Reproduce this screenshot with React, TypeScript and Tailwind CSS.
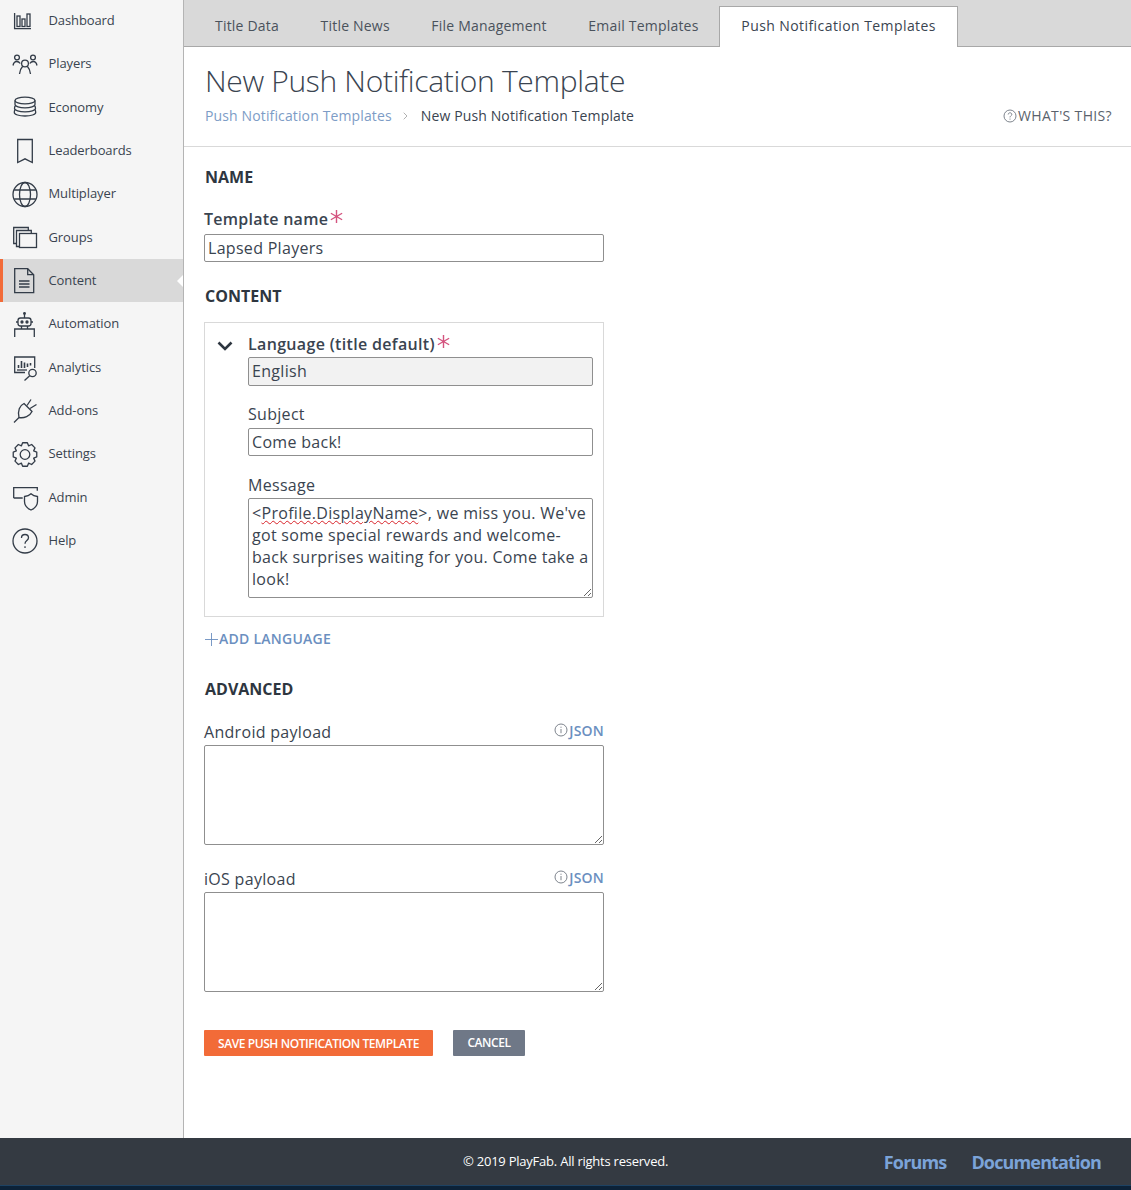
// App.tsx - PlayFab style "New Push Notification Template" page.
import type { ReactNode } from "react";

const font = { fontFamily: '"Open Sans", "Liberation Sans", sans-serif' };

function Glyph({ children }: { children: ReactNode }) {
  return (
    <svg viewBox="0 0 28 28" width="28" height="28" fill="none" stroke="#333c48" strokeWidth="1.3" className="shrink-0">
      {children}
    </svg>
  );
}

// Cog outline: 8 teeth around (14, 14.5)
function cogPath() {
  const pts: string[] = [];
  for (let i = 0; i < 8; i++) {
    const a = (i * Math.PI) / 4;
    const steps = [
      [a - 0.39, 9.4],
      [a - 0.2, 12],
      [a + 0.2, 12],
      [a + 0.39, 9.4],
    ];
    for (const [t, r] of steps) {
      pts.push(`${(14 + r * Math.sin(t)).toFixed(2)} ${(14.5 - r * Math.cos(t)).toFixed(2)}`);
    }
  }
  return `M${pts.join("L")}z`;
}

const icons: Record<string, ReactNode> = {
  Dashboard: (
    <>
      <path d="M3.600 6v15.600H20" />
      <rect x="6" y="9" width="3" height="10.500" />
      <rect x="11" y="12" width="3" height="7.500" />
      <rect x="16" y="7" width="3" height="12.500" />
    </>
  ),
  Players: (
    <>
      <circle cx="6" cy="7.500" r="2.400" />
      <circle cx="22" cy="7.500" r="2.400" />
      <circle cx="14" cy="13.500" r="3.400" />
      <path d="M2 15.500c.5-2.500 2-4 3.700-4 1.300 0 2.600.6 3.500 2M26 15.500c-.5-2.500-2-4-3.700-4-1.300 0-2.600.6-3.500 2M8.500 24c.2-3 1.500-6 3.200-7.800M19.500 24c-.2-3-1.500-6-3.200-7.800" />
    </>
  ),
  Economy: (
    <>
      <ellipse cx="14" cy="7.500" rx="10" ry="3.300" />
      <path d="M4 7.500v4c0 1.800 4.500 3.300 10 3.300s10-1.500 10-3.300v-4" />
      <path d="M4.500 12.500C3.500 13.500 3.500 14 3.500 15.500c0 1.800 4.700 3.300 10.500 3.300s10.500-1.500 10.500-3.300c0-1.500 0-2-1-3" />
      <path d="M4 16.500c-.7 1-.7 1.500-.7 3 0 2 4.800 3.500 10.700 3.500s10.700-1.500 10.700-3.500c0-1.500 0-2-.7-3" />
    </>
  ),
  Leaderboards: <path d="M6.700 2.500h14.600v23l-7.300-3.700-7.300 3.700z" />,
  Multiplayer: (
    <>
      <circle cx="14" cy="14.500" r="12" />
      <ellipse cx="14" cy="14.500" rx="5.500" ry="12" />
      <path d="M3.200 10h21.600M3.200 19h21.600" />
    </>
  ),
  Groups: (
    <>
      <path d="M5.500 20.500H2.700V4.500h14.600v3" />
      <path d="M8.500 23.500H5.500V7.500h14.800v3" />
      <rect x="8.500" y="10.500" width="17" height="14" />
    </>
  ),
  Content: (
    <>
      <path d="M3.700 1.700h13l6 6v18h-19z" />
      <path d="M16.700 1.700v6h6M8 14h10.500M8 17h10.500M8 20h10.500" />
    </>
  ),
  Automation: (
    <>
      <path d="M13.500 4v4" />
      <circle cx="13.500" cy="3.500" r=".8" fill="#333c48" />
      <rect x="7" y="8" width="13" height="8" rx="2.500" />
      <path d="M5 12h2M20 12h2M10.500 16v3M16.500 16v3" />
      <path d="M3.700 27v-8h19.600v8" />
      <circle cx="11" cy="12" r="1" fill="#333c48" />
      <circle cx="16" cy="12" r="1" fill="#333c48" />
    </>
  ),
  Analytics: (
    <>
      <path d="M14 19.500H3.700V4h20v11" />
      <path d="M6 17h10" />
      <path d="M7.500 15v-3M10.500 15V8M13.500 15V9.500M16.500 14v-3.500M19.500 12.500V10" strokeWidth="1.600" />
      <circle cx="21.500" cy="20" r="3.700" />
      <path d="M18.700 22.700 13.500 27.500" />
    </>
  ),
  "Add-ons": (
    <>
      <path d="M3 25.500 8 20.500" />
      <path d="M13 6.500 21 14.500C19 19 13 21.500 8 20.500 6.500 14 8.500 8.500 13 6.500z" />
      <path d="M16 8.500 20 2.500M19 11.500 25.500 7.500" />
    </>
  ),
  Settings: (
    <>
      <circle cx="14" cy="14.500" r="4.800" />
      <path d={cogPath()} strokeLinejoin="round" />
    </>
  ),
  Admin: (
    <>
      <path d="M2.700 15V4.700h23.600v3M2.700 15h9" />
      <path d="M13.500 13.500c2.500-.2 5-1.200 6.500-2.700 1.500 1.500 4 2.500 6.500 2.700v5c0 4-3 7-6.500 8.500-3.500-1.500-6.500-4.500-6.500-8.500z" />
    </>
  ),
  Help: (
    <>
      <circle cx="14" cy="14" r="12" />
      <path d="M10.500 11c0-2.200 1.500-3.500 3.500-3.500s3.500 1.300 3.500 3.200c0 2.800-3.500 2.800-3.500 6" />
      <path d="M14 19.300v1.800" />
    </>
  ),
};

const navItems = ["Dashboard", "Players", "Economy", "Leaderboards", "Multiplayer", "Groups", "Content", "Automation", "Analytics", "Add-ons", "Settings", "Admin", "Help"];

const tabs = ["Title Data", "Title News", "File Management", "Email Templates"];

function Sidebar() {
  return (
    <nav className="w-[184px] shrink-0 border-r border-[#b4b4b4] bg-[#f5f5f5]">
      <ul className="-mt-px">
        {navItems.map((item) => {
          const active = item === "Content";
          return (
            <li
              key={item}
              className={
                active
                  ? "relative flex h-[43.33px] items-center gap-[9.5px] border-l-[3px] border-[#f26b38] bg-[#d9d9d9] pl-[8px] text-[13px] tracking-[-0.1px] text-[#3a4450]"
                  : "relative flex h-[43.33px] items-center gap-[9.5px] pl-[11px] text-[13px] tracking-[-0.1px] text-[#3a4450]"
              }
            >
              <Glyph>{icons[item]}</Glyph>
              <span>{item}</span>
              {active && <span className="absolute right-0 top-1/2 h-0 w-0 -translate-y-1/2 border-y-[6px] border-r-[6px] border-y-transparent border-r-white" />}
            </li>
          );
        })}
      </ul>
    </nav>
  );
}

function Heading({ children }: { children: ReactNode }) {
  return <h2 className="ml-px text-[16px] font-bold uppercase leading-[22px] text-[#2e3640]">{children}</h2>;
}

function Asterisk() {
  return (
    <svg viewBox="0 0 12 12" width="13" height="13" fill="none" stroke="#d4547f" strokeWidth="1.300" className="ml-[2px] inline-block align-[2px]">
      <path d="M6 0v12M.8 3l10.400 6M.8 9l10.400-6" />
    </svg>
  );
}

function TextBox({ value, muted }: { value: string; muted?: boolean }) {
  return (
    <input
      readOnly
      value={value}
      className={`block w-full rounded-[2px] border border-[#8f8f8f] px-[3px] text-[16px] tracking-[0.3px] text-[#3a4450] outline-none ${muted ? "h-[29px] bg-[#f2f2f2] pb-px" : "h-[28px] bg-white"}`}
    />
  );
}

function PayloadField({ label }: { label: string }) {
  return (
    <div>
      <div className="flex h-[26px] items-end justify-between">
        <label className="mb-px text-[16px] leading-[24px] tracking-[0.3px] text-[#3a4450]">{label}</label>
        <span className="mb-[4px] flex items-center text-[14px] font-semibold leading-[20px] tracking-[0.2px] text-[#6b8fc0]">
          <svg viewBox="0 0 14 14" width="14" height="14" fill="none" stroke="#6f7680" strokeWidth="0.9" className="mb-[3px] mr-px">
            <circle cx="7" cy="7" r="6" />
            <path d="M7 6v4.200M7 3.700v1.100" />
          </svg>
          JSON
        </span>
      </div>
      <textarea readOnly className="block h-[100px] w-full rounded-[2px] border border-[#8f8f8f] bg-white outline-none" />
    </div>
  );
}

export default function App() {
  return (
    <div style={font} className="flex h-[1190px] flex-col overflow-hidden bg-white">
      <div className="flex min-h-0 flex-1">
        <Sidebar />
        <main className="min-w-0 flex-1">
          <div className="flex h-[47px] items-end border-b border-[#a8a8a8] bg-[#d9d9d9] pl-[10.2px]">
            {tabs.map((tab) => (
              <span key={tab} className="flex h-[40px] items-center px-[20.8px] pb-[2px] text-[14px] tracking-[0.2px] text-[#4a525c]">
                {tab}
              </span>
            ))}
            <span className="-mb-px flex h-[41px] items-center border border-b-0 border-[#a8a8a8] bg-white px-[21px] pb-[3px] text-[14px] tracking-[0.42px] text-[#3a4450]">
              Push Notification Templates
            </span>
          </div>

          <header className="flex h-[100px] items-end justify-between border-b border-[#d9d9d9] pb-[20px] pl-[21px] pr-[19px]">
            <div>
              <h1 className="text-[30px] font-light leading-[42px] tracking-[-0.33px] text-[#3a4450]">New Push Notification Template</h1>
              <p className="mt-[4px] flex items-center text-[14px] leading-[20px] tracking-[0.13px]">
                <span className="text-[#7d9cc6]">Push Notification Templates</span>
                <svg viewBox="0 0 5 8" width="5" height="8" fill="none" stroke="#a8a8a8" strokeWidth="0.9" className="ml-[11px] mr-[13px]">
                  <path d="M.7.7 4 4 .7 7.300" />
                </svg>
                <span className="text-[#3a4450]">New Push Notification Template</span>
              </p>
            </div>
            <span className="flex items-center text-[14px] leading-[20px] tracking-[0.35px] text-[#5a626c]">
              <svg viewBox="0 0 14 14" width="14" height="14" fill="none" stroke="#6f7680" strokeWidth="0.9" className="mr-px">
                <circle cx="7" cy="7" r="6" />
                <path d="M5.200 5.500c0-1.100.8-1.700 1.800-1.700s1.800.6 1.800 1.600c0 1.400-1.800 1.400-1.800 3M7 9.600v1" />
              </svg>
              WHAT'S THIS?
            </span>
          </header>

          <form className="w-[421px] pl-[20px] pr-px pt-[19px]">
            <Heading>NAME</Heading>
            <div className="mt-[19px]">
              <label className="mb-[3px] block text-[16px] font-semibold leading-[24px] tracking-[0.25px] text-[#3a4450]">
                Template name
                <Asterisk />
              </label>
              <TextBox value="Lapsed Players" />
            </div>

            <div className="mt-[23px]">
              <Heading>CONTENT</Heading>
            </div>
            <section className="mt-[15px] flex h-[295px] border border-[#d9d9d9] pl-[12px] pr-[10px] pt-[9px]">
              <svg viewBox="0 0 16 12" width="16" height="12" fill="none" stroke="#2e3640" strokeWidth="2.600" className="mt-[8px] shrink-0">
                <path d="M1.500 2.500 8 9l6.500-6.500" />
              </svg>
              <div className="ml-[15px] min-w-0 flex-1">
                <label className="mb-px block text-[16px] font-semibold leading-[24px] tracking-[0.33px] text-[#3a4450]">
                  Language (title default)
                  <Asterisk />
                </label>
                <TextBox value="English" muted />
                <label className="mb-px mt-[15px] block text-[16px] leading-[26px] tracking-[0.3px] text-[#3a4450]">Subject</label>
                <TextBox value="Come back!" />
                <label className="mt-[16px] block text-[16px] leading-[26px] tracking-[0.3px] text-[#3a4450]">Message</label>
                <div className="h-[100px] w-full resize overflow-hidden rounded-[2px] border border-[#8f8f8f] bg-white pl-[3px] pt-[3px] text-[16px] leading-[22px] tracking-[0.3px] text-[#3a4450]">
                  &lt;<span className="underline decoration-[#d8232a] decoration-wavy decoration-1 underline-offset-1">Profile.DisplayName</span>&gt;, we miss you. We've got some special rewards and welcome-back surprises waiting for you. Come take a look!
                </div>
              </div>
            </section>

            <div className="mt-[11px] flex items-center text-[14px] font-semibold leading-[22px] tracking-[0.25px] text-[#6b8fc0]">
              <svg viewBox="0 0 15 15" width="15" height="15" fill="none" stroke="#6b8fc0" strokeWidth="0.9">
                <path d="M7.500 1v13M1 7.500h13" />
              </svg>
              ADD LANGUAGE
            </div>

            <div className="mt-[28px]">
              <Heading>ADVANCED</Heading>
            </div>
            <div className="mt-[19px] flex flex-col gap-[21px]">
              <PayloadField label="Android payload" />
              <PayloadField label="iOS payload" />
            </div>

            <div className="mt-[38px] flex gap-[20px]">
              <button type="button" className="h-[26px] w-[229px] rounded-[1px] bg-[#f26b38] pt-px text-[12px] font-semibold tracking-[-0.42px] text-white">
                SAVE PUSH NOTIFICATION TEMPLATE
              </button>
              <button type="button" className="h-[26px] w-[72px] rounded-[1px] bg-[#6f7887] text-[12px] font-semibold tracking-[-0.45px] text-white">
                CANCEL
              </button>
            </div>
          </form>
        </main>
      </div>

      <footer className="relative flex h-[52px] shrink-0 items-center border-b-[4px] border-[#0c2238] bg-[#343a42] text-white shadow-[inset_0_-1px_0_#1d4263]">
        <span className="absolute left-[463px] text-[13px] tracking-[-0.23px]">© 2019 PlayFab. All rights reserved.</span>
        <div className="ml-auto flex gap-[25px] pr-[30px] text-[18px] font-bold tracking-[-0.85px] text-[#7ba3d8]">
          <span>Forums</span>
          <span>Documentation</span>
        </div>
      </footer>
    </div>
  );
}
